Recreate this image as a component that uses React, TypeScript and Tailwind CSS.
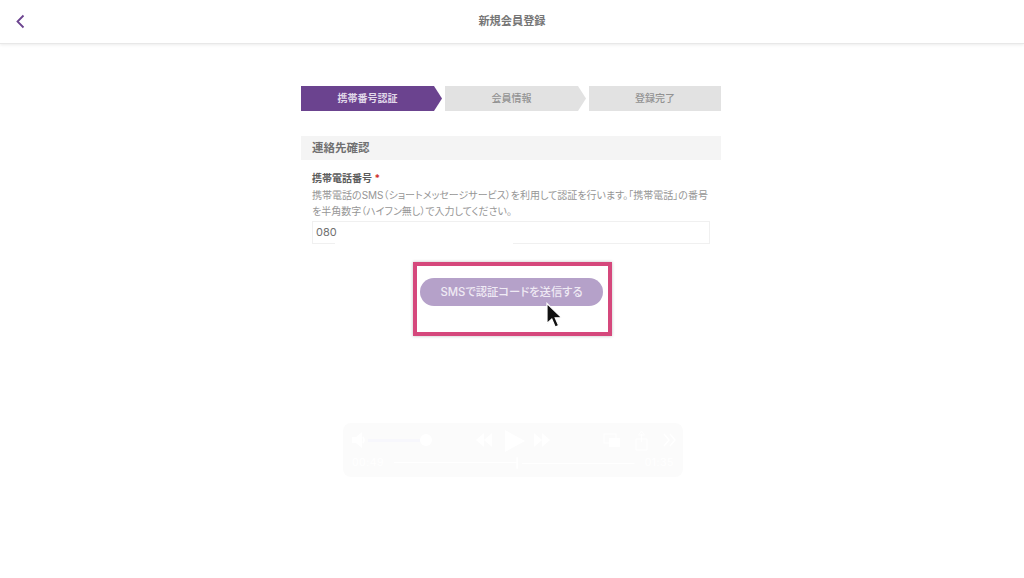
import React from 'react';

const jpFont = "font-['Inter','Noto_Sans_CJK_JP',sans-serif]";
const arrowStep =
  'flex w-[141px] items-center justify-center pr-[8px] text-[10px] [clip-path:polygon(0_0,133px_0,100%_50%,133px_100%,0_100%)]';

const StepBar: React.FC = () => (
  <div className="flex h-[25px] gap-[3px]">
    <div className={`${arrowStep} bg-[#6b438f] font-bold text-[#e0d8e9]`}>携帯番号認証</div>
    <div className={`${arrowStep} bg-[#e2e2e2] font-medium text-[#929292]`}>会員情報</div>
    <div className="flex w-[132px] items-center justify-center bg-[#e2e2e2] text-[10px] font-medium text-[#929292]">
      登録完了
    </div>
  </div>
);

// Faded-out video controls left in the capture
const PlayerGhost: React.FC = () => (
  <div className="absolute left-[343px] top-[423px] flex h-[54px] w-[340px] flex-col rounded-[8px] bg-[#fbfbfb] px-[9px] pt-[6px]">
    <svg width="324" height="24" viewBox="0 0 324 24" fill="#ffffff">
      <path d="M0 8h4l6-5v16l-6-5H0z" />
      <path d="M11 8q2 3 0 6" fill="none" stroke="#ffffff" strokeWidth="1.5" />
      <rect x="16" y="10" width="52" height="3" fill="#f7f7fc" />
      <circle cx="74" cy="11" r="6" />
      <path d="M132 4v14l-8-7zM140 4v14l-8-7z" />
      <path d="M153 1l20 11-20 11z" />
      <path d="M182 4l8 7-8 7zM190 4l8 7-8 7z" />
      <rect x="257" y="9" width="11" height="9" />
      <rect x="252" y="5" width="12" height="9" fill="none" stroke="#ffffff" />
      <path d="M284 10h11v11h-11zM289.500 2l3 4h-6zM289.500 5v8" fill="none" stroke="#ffffff" />
      <path d="M312 5l5 6-5 6M318 5l5 6-5 6" fill="none" stroke="#ffffff" strokeWidth="1.5" />
    </svg>
    <div className="mt-[3px] flex items-center gap-[10px] text-[10.5px] leading-[14px] tracking-[0.5px] text-white">
      <span>00:49</span>
      <svg width="250" height="12" viewBox="0 0 250 12" fill="#ffffff">
        <rect x="0" y="5" width="127" height="1" />
        <rect x="127" y="0" width="2" height="12" />
        <rect x="133" y="6" width="117" height="1" />
      </svg>
      <span>01:35</span>
    </div>
  </div>
);

const App: React.FC = () => {
  return (
    <div className={`relative h-[578px] w-[1024px] overflow-hidden bg-white [font-feature-settings:'palt'] ${jpFont}`}>
      {/* Header */}
      <header className="grid h-[44px] grid-cols-[1fr_auto_1fr] items-center border-b border-[#e8e8e8] bg-white pl-[14px] shadow-[0_1px_3px_rgba(0,0,0,0.08)]">
        <svg width="12" height="15" viewBox="0 0 12 15" fill="none">
          <path d="M9.500 1.500L3.500 7.500l6 6" stroke="#6b438f" strokeWidth="1.800" />
        </svg>
        <h1 className="pr-[14px] text-[11.200px] font-bold text-[#767676]">新規会員登録</h1>
      </header>

      {/* Form */}
      <main className="ml-[301px] w-[420px] pt-[42px]">
        <StepBar />
        <h2 className="mt-[25px] flex h-[24px] items-center bg-[#f4f4f4] pl-[11px] pt-[2px] text-[11.500px] font-bold text-[#707070]">
          連絡先確認
        </h2>
        <div className="px-[11px] pt-[10px]">
          <p className="text-[10px] font-bold leading-[16px] text-[#5c5c5c]">
            携帯電話番号 <span className="text-[#d0312d]">*</span>
          </p>
          <p className="mt-[1px] whitespace-nowrap text-[10px] leading-[16px] text-[#969696]">
            携帯電話のSMS（ショートメッセージサービス）を利用して認証を行います。「携帯電話」の番号
            <br />
            を半角数字（ハイフン無し）で入力してください。
          </p>
          <div className="relative mt-[2px] flex h-[23px] items-center border border-[#f0f0f0] pl-[3px] text-[11px] text-[#707070]">
            080
            {/* masked part of the number */}
            <div className="absolute bottom-[-2px] left-[22px] h-[5px] w-[178px] bg-white" />
          </div>
        </div>

        {/* Highlight around the submit button */}
        <div className="relative ml-[112px] mt-[18px] h-[74px] w-[199px] border-4 border-[#d5487c] pl-[3px] pt-[12px] shadow-[0_0_3px_rgba(0,0,0,0.25)]">
          <button className="h-[28px] w-[183px] rounded-full bg-[#b5a1c9] text-[11.300px] font-medium text-[#efeaf4]">
            SMSで認証コードを送信する
          </button>
          <svg className="absolute left-[127px] top-[36px]" width="20" height="28" viewBox="0 0 20 28">
            <path
              d="M3 1.500v20l4.800-4.400 3.400 8 3.400-1.500-3.400-7.800h6.600z"
              fill="#111111"
              stroke="#ffffff"
              strokeWidth="1.200"
            />
          </svg>
        </div>
      </main>

      <PlayerGhost />
    </div>
  );
};

export default App;
